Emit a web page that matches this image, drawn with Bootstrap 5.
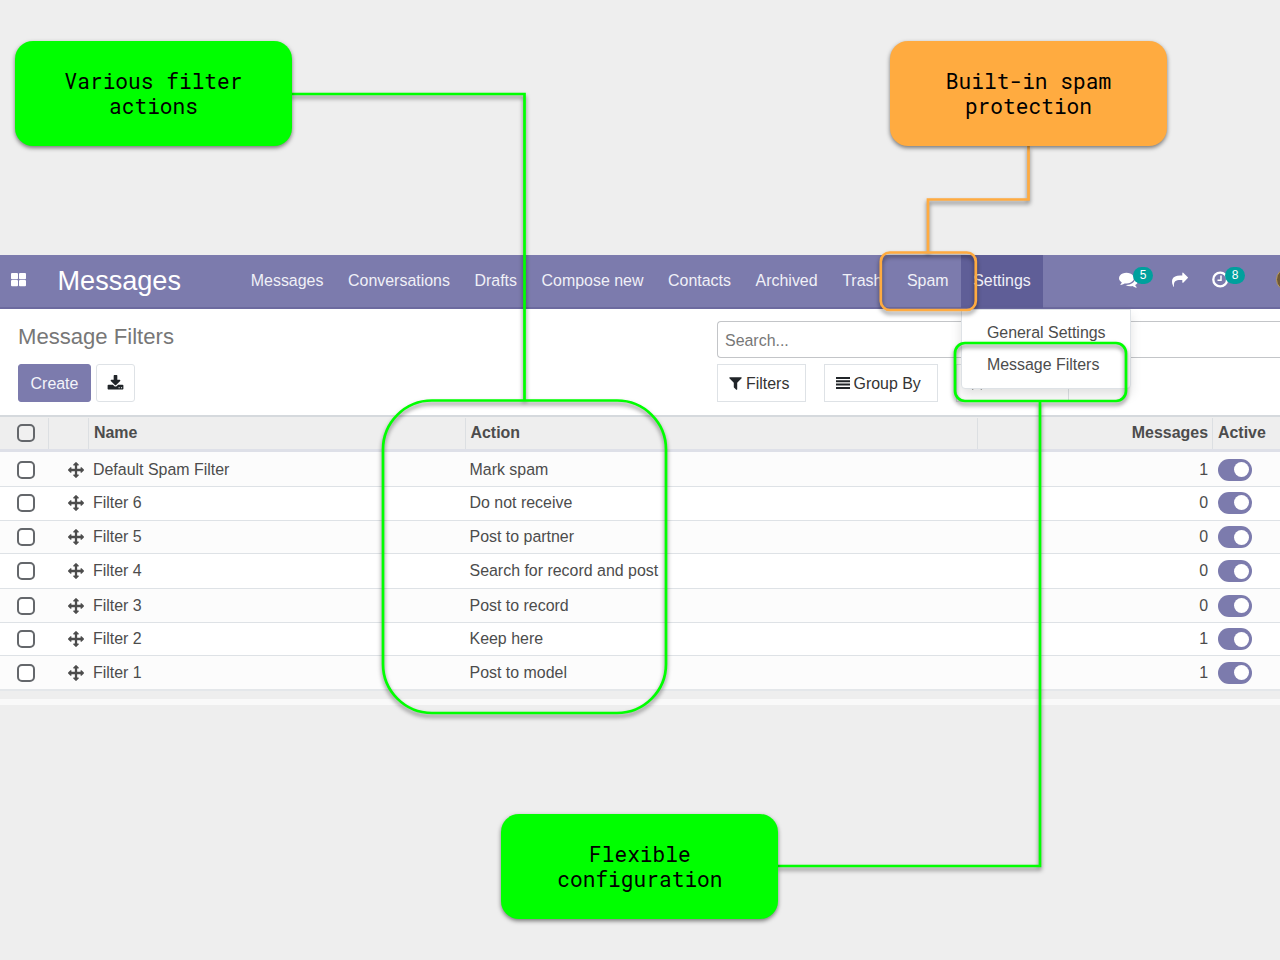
<!DOCTYPE html>
<html lang="en">
<head>
<meta charset="utf-8">
<title>Message Filters</title>
<link rel="stylesheet" href="https://cdn.jsdelivr.net/npm/bootstrap@5.3.0/dist/css/bootstrap.min.css">
<script src="https://cdn.jsdelivr.net/npm/bootstrap@5.3.0/dist/js/bootstrap.bundle.min.js"></script>
<style>
body{width:1280px;height:960px;overflow:hidden;background:#eee;color:#4c4c4c;font:15.95px/24px "Liberation Sans",Arial,sans-serif}
.stage{width:1280px;height:960px;padding-top:255px;overflow:hidden}
.topbar{height:54px;background:#7c7bad;border-bottom:2px solid #6c6a9f;color:#f0f0f7;padding:0 0 0 11px}
.apps{width:15px;height:14px;margin-top:-3px}
.brand-title{font-size:27.1px;margin-left:31.5px;width:181px;color:#fff;margin-top:-1px}
.topbar .nav-link{color:#f0f0f7;padding:0 12.31px;line-height:51px;height:52px}
.topbar .nav-link.active{background:#5f5e97;height:53px}
.settings-menu{position:absolute;left:0;top:54px;width:170px;height:80px;background:#fff;border:1px solid #dee2e6;border-radius:0 0 4px 4px;padding:7px 0 0 25px;color:#4c4c4c;line-height:32px;z-index:3;box-shadow:0 6px 12px rgba(0,0,0,.12)}
.tray{position:relative;width:20px;height:20px}
.count{position:absolute;left:14px;top:-3px;width:20px;height:17px;border-radius:9px;background:#00a09d;color:#fff;font-size:12px;line-height:17px;text-align:center}
.avatar{width:23px;height:23px;background:#6f5834;border:1px solid #b79a62}
.panel{height:106px;background:#fff}
.page-title{font-size:22.1px;color:#777;line-height:28px}
.obtn{height:38px;border:1px solid #dee2e6;border-radius:3px;background:#fff;color:#333;padding:0;line-height:24px}
.obtn.sq{border-radius:0}
.obtn.sq span{padding-top:1px}
.create{width:73px;background:#7c7bad;border-color:#7c7bad;color:#f4f4fa;padding-top:1px}
.search{height:37px;border:1px solid #c3c5c8;border-radius:4px 0 0 4px;border-right:0;color:#777;padding-left:7px;line-height:37px;width:563px}
.list{table-layout:fixed;width:1280px;border-collapse:separate;border-spacing:0;margin:0}
.list th{height:37px;padding:0 5px 0 5px;background:#eee;border-top:2px solid #d5d9dd;border-bottom:3px solid #dee0e8;line-height:29px;position:relative;padding-bottom:1px}
.list th+th::before{content:"";position:absolute;left:-1px;top:1px;height:31px;width:1px;background:#dcdfe2}
.list th:first-child::before{display:none}
.list td{padding:0 5px 0 4px;background:#fff;border-bottom:1px solid #dee2e6;line-height:20px;vertical-align:middle}
.list tbody tr:nth-child(odd) td{background:#fcfcfc}
.list tbody tr:first-child td{padding-top:1px}
.list tbody tr:nth-child(2) td{padding-bottom:2px}
.list tbody tr:last-child td{border-bottom:2px solid #e4e7ea}
.box{display:block;width:18px;height:18px;border:2px solid #64676b;border-radius:5px;background:#fff;margin-left:13px}
.list th .box{background:#f0f0f0;margin-left:12px}
.switch{display:block;width:34px;height:22px;border-radius:11px;background:#7c7bad;position:relative}
.switch::after{content:"";position:absolute;right:3px;top:3.500px;width:15px;height:15px;border-radius:50%;background:#fff}
.foot{height:14px;border-bottom:6px solid #f9f9f9}
.callout{position:absolute;z-index:6;width:277px;height:105px;padding-top:1px;border-radius:18px;background:#0f0;color:#000;font:21.2px/25.4px "Roboto Mono","DejaVu Sans Mono",monospace;box-shadow:0 2px 4px rgba(0,0,0,.5);text-align:center}
.callout.orange{background:#ffab40}
.lines{position:absolute;left:0;top:0;z-index:5;pointer-events:none;filter:drop-shadow(0 3px 2.2px rgba(0,0,0,.5))}
svg{display:block}
</style>
</head>
<body>
<svg width="0" height="0" class="position-absolute"><defs>
<symbol id="move" viewBox="0 0 1792 1792"><path d="M1792 896q0 26-19 45l-256 256q-19 19-45 19t-45-19-19-45v-128h-384v384h128q26 0 45 19t19 45-19 45l-256 256q-19 19-45 19t-45-19l-256-256q-19-19-19-45t19-45 45-19h128v-384h-384v128q0 26-19 45t-45 19-45-19l-256-256q-19-19-19-45t19-45l256-256q19-19 45-19t45 19 19 45v128h384v-384h-128q-26 0-45-19t-19-45 19-45l256-256q19-19 45-19t45 19l256 256q19 19 19 45t-19 45-45 19h-128v384h384v-128q0-26 19-45t45-19 45 19l256 256q19 19 19 45z"/></symbol>
</defs></svg>
<div class="stage position-relative">
<nav class="topbar d-flex align-items-center">
  <svg class="apps flex-shrink-0" viewBox="0 0 15 14" fill="#fff"><rect width="7" height="6.2" rx="1"/><rect x="8" width="7" height="6.2" rx="1"/><rect y="7" width="7" height="6.2" rx="1"/><rect x="8" y="7" width="7" height="6.2" rx="1"/></svg>
  <div class="brand-title flex-shrink-0">Messages</div>
  <div class="d-flex align-self-start flex-shrink-0">
    <a class="nav-link">Messages</a><a class="nav-link">Conversations</a><a class="nav-link">Drafts</a><a class="nav-link text-nowrap">Compose new</a><a class="nav-link">Contacts</a><a class="nav-link">Archived</a><a class="nav-link">Trash</a><a class="nav-link">Spam</a>
    <div class="position-relative"><a class="nav-link active">Settings</a>
      <div class="settings-menu text-nowrap"><div>General Settings</div><div>Message Filters</div></div></div>
  </div>
  <div class="d-flex align-items-center flex-shrink-0" style="margin-left:76px;margin-top:-3px">
    <div class="tray"><svg width="19" height="19" viewBox="0 0 1792 1792" fill="#fff"><path d="M1408 768q0 139-94 257t-256.5 186.5-353.5 68.5q-86 0-176-16-124 88-278 128-36 9-86 16h-3q-11 0-20.500-8t-11.500-21q-1-3-1-6.500t.5-6.500 2-6l2.500-5 3.500-5.500 4-5 4.500-5 4-4.500q5-6 23-25t26-29.500 22.500-29 25-38.500 20.500-44q-124-72-195-177t-71-224q0-139 94-257t256.500-186.500 353.500-68.500 353.500 68.500 256.500 186.500 94 257zm384 256q0 120-71 224.500t-195 176.500q10 24 20.500 44t25 38.500 22.500 29 26 29.500 23 25q1 1 4 4.500t4.500 5 4 5 3.500 5.500l2.500 5 2 6 .5 6.500-1 6.500q-3 14-13 22t-22 7q-50-7-86-16-154-40-278-128-90 16-176 16-271 0-472-132 58 4 88 4 161 0 309-45t264-129q125-92 192-212t67-254q0-77-23-152 129 71 204 178t75 230z"/></svg><span class="count">5</span></div>
    <div class="tray" style="margin-left:33px"><svg width="16" height="16" style="margin-top:2px" viewBox="0 0 1792 1792" fill="#fff" preserveAspectRatio="none"><path d="M1792 640q0 26-19 45l-512 512q-19 19-45 19t-45-19-19-45v-256h-224q-98 0-175.500 6t-154 21.500-133 42.500-105.500 69.500-80 101-48.500 138.500-17.500 181q0 55 5 123 0 6 2.500 23.500t2.500 26.500q0 15-8.500 25t-23.500 10q-16 0-28-17-7-9-13-22t-13.500-30-10.500-24q-127-285-127-451 0-199 53-333 162-403 875-403h224v-256q0-26 19-45t45-19 45 19l512 512q19 19 19 45z"/></svg></div>
    <div class="tray" style="margin-left:20px"><svg width="17" height="19" viewBox="0 0 17 19" fill="none" stroke="#fff"><circle cx="8.200" cy="9.500" r="6.900" stroke-width="2.300"/><path d="M9 5.500v4.700H5.500" stroke-width="1.500"/></svg><span class="count" style="left:13px">8</span></div>
    <div class="avatar rounded-circle flex-shrink-0" style="margin-left:44px"></div>
  </div>
</nav>
<section class="panel d-flex">
  <div style="width:717px;padding:14px 0 0 18px">
    <div class="page-title">Message Filters</div>
    <div class="d-flex" style="gap:5px;margin-top:13px"><button class="obtn create">Create</button>
      <button class="obtn d-flex align-items-center justify-content-center" style="width:39px"><svg width="17" height="17" viewBox="0 0 1792 1792" fill="#212529"><path d="M1344 1344q0-26-19-45t-45-19-45 19-19 45 19 45 45 19 45-19 19-45zm256 0q0-26-19-45t-45-19-45 19-19 45 19 45 45 19 45-19 19-45zm128-224v320q0 40-28 68t-68 28h-1472q-40 0-68-28t-28-68v-320q0-40 28-68t68-28h465l135 136q58 56 136 56t136-56l136-136h464q40 0 68 28t28 68zm-325-569q17 41-14 70l-448 448q-18 19-45 19t-45-19l-448-448q-31-29-14-70 17-39 59-39h256v-448q0-26 19-45t45-19h256q26 0 45 19t19 45v448h256q42 0 59 39z"/></svg></button></div>
  </div>
  <div style="width:563px;padding-top:12px">
    <div class="search">Search...</div>
    <div class="d-flex" style="gap:18px;margin-top:6px">
      <button class="obtn sq d-flex align-items-center" style="width:89px;padding-left:9px;gap:2px"><svg width="17" height="16" viewBox="0 0 1792 1792" fill="#212529"><path d="M1595 295q17 41-14 70l-493 493v742q0 42-39 59-13 5-25 5-27 0-45-19l-256-256q-19-19-19-45v-486l-493-493q-31-29-14-70 17-39 59-39h1280q42 0 59 39z"/></svg><span>Filters</span></button>
      <button class="obtn sq d-flex align-items-center text-nowrap" style="width:114px;padding-left:10.500px;gap:4px"><svg width="14" height="12" viewBox="0 0 14 12" fill="#212529"><path d="M0 0h14v2H0zM0 3.300h14v2H0zM0 6.600h14v2H0zM0 9.900h14v2H0z"/></svg><span>Group By</span></button>
      <button class="obtn sq d-flex align-items-center" style="width:113px;padding-left:12px"><svg width="16" height="16" viewBox="0 0 16 16" fill="#777"><path d="M8 0l2.300 5 5.700.7-4.200 3.800 1.100 5.500L8 12.300 3.100 15l1.100-5.500L0 5.700 5.700 5z"/></svg></button>
    </div>
  </div>
</section>
<table class="list">
<colgroup><col style="width:49px"><col style="width:40px"><col style="width:376.500px"><col style="width:512px"><col style="width:235.500px"><col style="width:67px"></colgroup>
<thead><tr><th><span class="box"></span></th><th></th><th>Name</th><th>Action</th><th class="text-end">Messages</th><th>Active</th></tr></thead>
<tbody id="rows"></tbody>
</table>
<div class="foot"></div>

<svg class="lines" width="1280" height="960" fill="none" stroke="#0f0" stroke-width="2.700">
  <path d="M291 94H524.500V401"/><rect x="383" y="400.500" width="283" height="312.500" rx="49"/>
  <path d="M778 866H1040V401"/><rect x="955" y="343" width="171" height="58" rx="10"/>
  <g stroke="#ffab40"><path d="M1028.500 146V199.500H928V253"/><rect x="880.800" y="252.500" width="95" height="57.500" rx="9"/></g>
</svg>
<div class="callout d-flex align-items-center justify-content-center" style="left:15px;top:41.400px">Various filter<br>actions</div>
<div class="callout orange d-flex align-items-center justify-content-center" style="left:890px;top:41.400px">Built-in spam<br>protection</div>
<div class="callout d-flex align-items-center justify-content-center" style="left:501.400px;top:814px">Flexible<br>configuration</div>
</div>
<script>
const rows=[["Default Spam Filter","Mark spam",1,35],["Filter 6","Do not receive",0,34],["Filter 5","Post to partner",0,33],["Filter 4","Search for record and post",0,35],["Filter 3","Post to record",0,34],["Filter 2","Keep here",1,33],["Filter 1","Post to model",1,35]];
document.getElementById("rows").innerHTML=rows.map(r=>`<tr style="height:${r[3]}px"><td><span class="box"></span></td><td><svg width="16" height="16" fill="#4c4c4c" style="margin-left:15px"><use href="#move"/></svg></td><td>${r[0]}</td><td>${r[1]}</td><td class="text-end">${r[2]}</td><td style="padding-left:5px"><span class="switch"></span></td></tr>`).join("");
document.querySelectorAll(".callout").forEach(c=>{c.innerHTML="<div>"+c.innerHTML+"</div>"});
</script>
</body>
</html>
